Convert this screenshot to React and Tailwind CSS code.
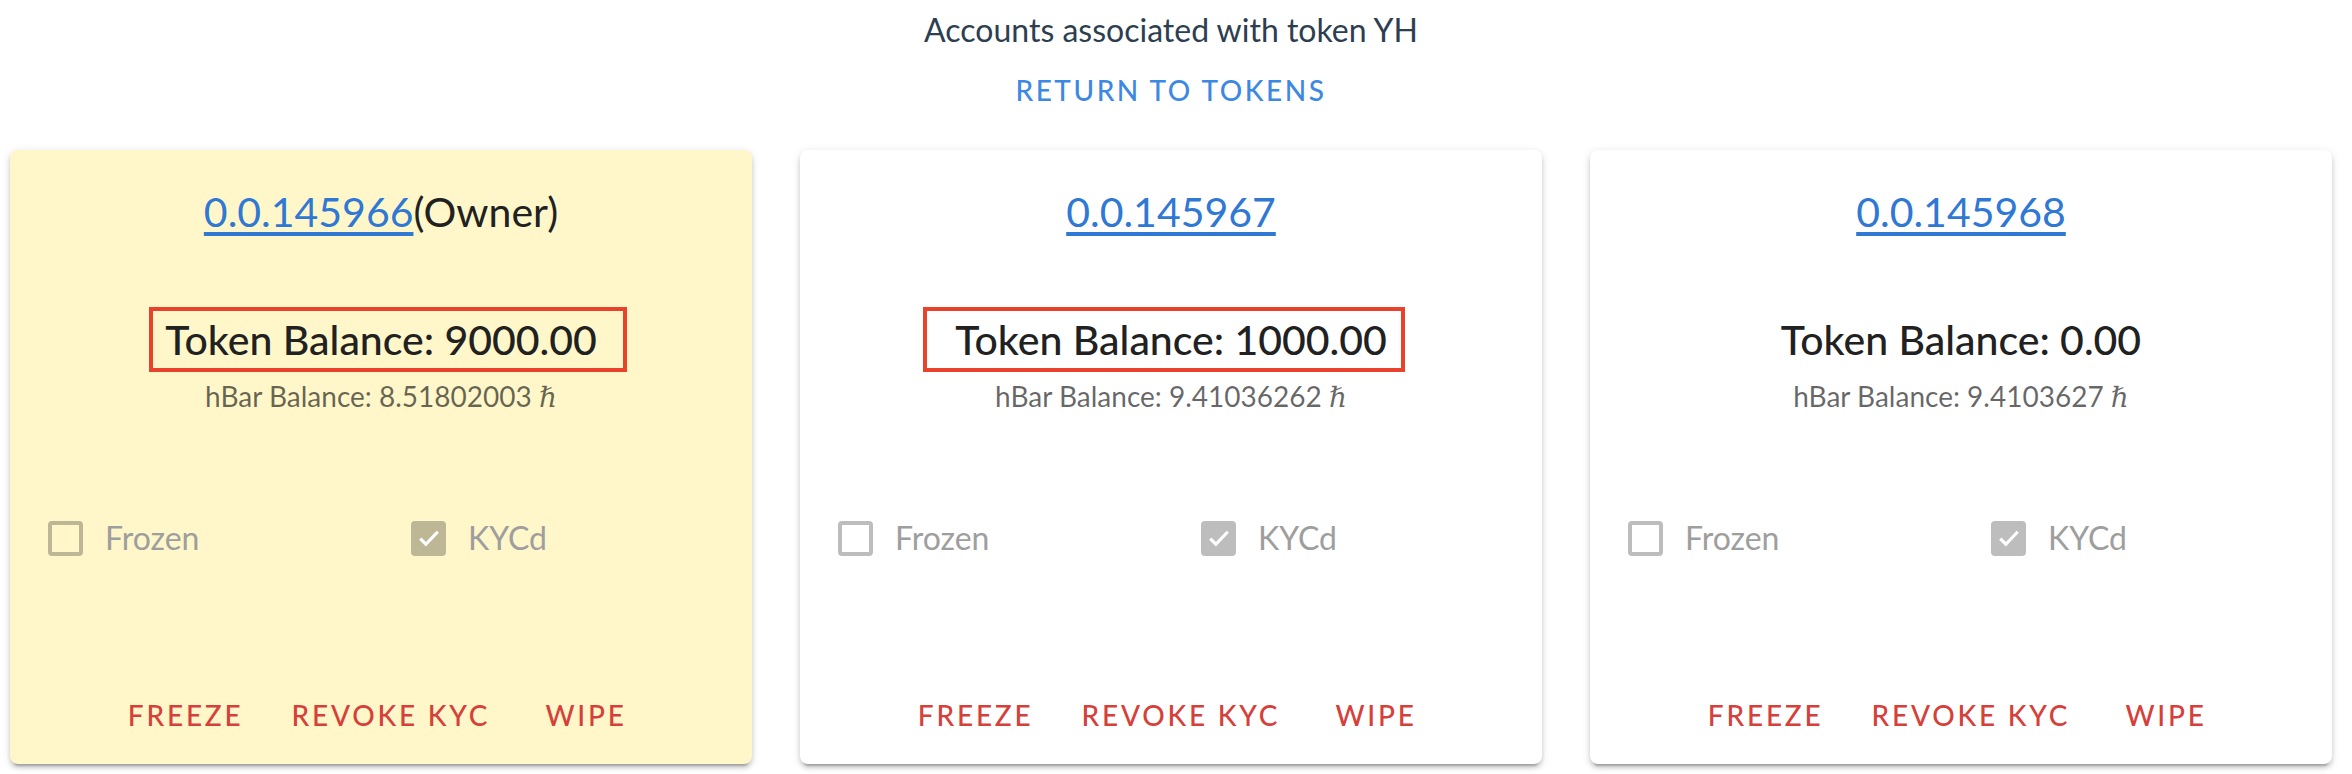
import { useState } from "react";

const accounts = [
  {
    id: "0.0.145966",
    owner: true,
    token: "9000.00",
    hbar: "8.51802003",
    highlight: "left-[-16px] right-[-30px]",
  },
  {
    id: "0.0.145967",
    owner: false,
    token: "1000.00",
    hbar: "9.41036262",
    highlight: "left-[-32px] right-[-18px]",
  },
  {
    id: "0.0.145968",
    owner: false,
    token: "0.00",
    hbar: "9.4103627",
    highlight: null,
  },
];

function Checkbox({ checked, label }) {
  return (
    <label className="flex items-center gap-[22px] text-[32px] text-[#9e9e9e]">
      {checked ? (
        <span className="flex h-[35px] w-[35px] items-center justify-center rounded-[4px] bg-black/[0.26]">
          <svg viewBox="0 0 24 24" className="h-[30px] w-[30px]">
            <path
              d="M5 12.5l4.5 4.5L19 7"
              fill="none"
              stroke="white"
              strokeWidth="2.6"
            />
          </svg>
        </span>
      ) : (
        <span className="h-[35px] w-[35px] rounded-[4px] border-[4px] border-black/[0.26]" />
      )}
      {label}
    </label>
  );
}

function AccountCard({ account }) {
  const [frozen] = useState(false);
  const [kyc] = useState(true);

  return (
    <div
      className={`flex flex-col items-center rounded-[8px] shadow-[0_6px_2px_-4px_rgba(0,0,0,0.2),0_4px_4px_0_rgba(0,0,0,0.14),0_2px_10px_0_rgba(0,0,0,0.12)] ${
        account.owner ? "bg-[#fff7c9]" : "bg-white"
      }`}
    >
      {/* Account id */}
      <div className="pt-[38px] text-[41px] leading-[48px] text-[#212121]">
        <a href="#" className="text-[#2f78d4] underline decoration-[4px] underline-offset-[5px]">
          {account.id}
        </a>
        {account.owner && "(Owner)"}
      </div>

      {/* Balances */}
      <div className="relative mt-[79px] text-[41px] font-medium leading-[49px] text-[#212121]">
        Token Balance: {account.token}
        {account.highlight && (
          <span
            className={`pointer-events-none absolute top-[-8px] bottom-[-8px] border-[4px] border-[#e8412c] ${account.highlight}`}
          />
        )}
      </div>
      <div className="mt-[14px] text-[28px] leading-[36px] text-black/60">
        hBar Balance: {account.hbar}{" "}
        <span className="font-['DejaVu_Serif',serif] text-[28px] italic">ℏ</span>
      </div>

      {/* Flags */}
      <div className="mt-[98px] grid h-[48px] w-full grid-cols-2 items-center">
        <div className="pl-[38px]">
          <Checkbox checked={frozen} label="Frozen" />
        </div>
        <div className="pl-[30px]">
          <Checkbox checked={kyc} label="KYCd" />
        </div>
      </div>

      {/* Actions */}
      <div className="mt-[117px] mb-[13px] flex gap-[16px]">
        {["Freeze", "Revoke KYC", "Wipe"].map((action) => (
          <button
            key={action}
            className="h-[72px] min-w-[128px] px-[16px] text-[28px] font-medium uppercase tracking-[0.1em] text-[#d6403a]"
          >
            {action}
          </button>
        ))}
      </div>
    </div>
  );
}

export default function App() {
  return (
    <div className="min-h-screen bg-white pl-[10px] pr-[20px] font-['Lato',sans-serif]">
      <div className="flex flex-col items-center">
        <p className="mt-[12px] text-[32px] leading-[36px] text-[#2c3e50]">
          Accounts associated with token YH
        </p>
        <button className="mt-[6px] h-[72px] px-[16px] text-[28px] font-medium uppercase tracking-[0.09em] text-[#3c88e3]">
          Return to tokens
        </button>
      </div>

      <div className="mt-[24px] grid grid-cols-3 gap-[48px]">
        {accounts.map((account) => (
          <AccountCard key={account.id} account={account} />
        ))}
      </div>
    </div>
  );
}
